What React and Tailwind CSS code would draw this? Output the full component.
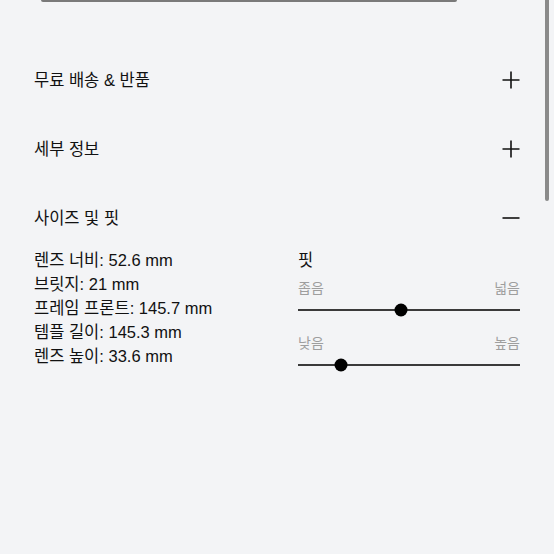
import React from "react";

const font = { fontFamily: '"Liberation Sans", "Noto Sans CJK KR", sans-serif' };

function Plus() {
  return (
    <svg width="20" height="20" viewBox="0 0 20 20" fill="none" stroke="#111" strokeWidth="1.6">
      <path d="M10 1.5V18.5M1.5 10H18.5" />
    </svg>
  );
}
function Minus() {
  return (
    <svg width="20" height="20" viewBox="0 0 20 20" fill="none" stroke="#111" strokeWidth="1.6">
      <path d="M1.5 10H18.5" />
    </svg>
  );
}

function Heading({ title, open }) {
  return (
    <div className="flex h-6 items-center justify-between">
      <span className="text-[16.5px] text-[#111]">{title}</span>
      <span className="mr-[-1px]">{open ? <Minus /> : <Plus />}</span>
    </div>
  );
}

function Slider({ left, right, pct }) {
  return (
    <div>
      <div className="flex h-5 items-center justify-between text-[14px] text-[#9e9e9e]">
        <span>{left}</span>
        <span>{right}</span>
      </div>
      <div className="relative flex h-6 items-center">
        <div className="h-[2px] w-full bg-[#3a3a3a]" />
        <div
          className="absolute top-1/2 h-[13px] w-[13px] -translate-x-1/2 -translate-y-1/2 rounded-full bg-black"
          style={{ left: `${pct}%` }}
        />
      </div>
    </div>
  );
}

export default function App() {
  return (
    <div className="relative h-[554px] w-[554px] overflow-hidden bg-[#f3f4f6]" style={font}>
      <div className="ml-[41px] h-[2px] w-[416px] rounded-b bg-[#7a7a7a]" />
      <div className="absolute right-[5px] top-0 h-[201px] w-[4px] rounded-b-full bg-[#8a8a8a]" />
      <div className="px-[34px]">
        <div className="mt-[66px]">
          <Heading title="무료 배송 & 반품" />
        </div>
        <div className="mt-[45px]">
          <Heading title="세부 정보" />
        </div>
        <div className="mt-[45px]">
          <Heading title="사이즈 및 핏" open />
        </div>
        <div className="mt-[18px] grid grid-cols-[264px_1fr]">
          <div className="text-[16.5px] leading-6 text-[#111]">
            <div>렌즈 너비: 52.6 mm</div>
            <div>브릿지: 21 mm</div>
            <div>프레임 프론트: 145.7 mm</div>
            <div>템플 길이: 145.3 mm</div>
            <div>렌즈 높이: 33.6 mm</div>
          </div>
          <div>
            <div className="text-[16.5px] leading-6 text-[#111]">핏</div>
            <div className="mt-[6px]">
              <Slider left="좁음" right="넓음" pct={46.4} />
            </div>
            <div className="mt-[11px]">
              <Slider left="낮음" right="높음" pct={19.4} />
            </div>
          </div>
        </div>
      </div>
    </div>
  );
}
